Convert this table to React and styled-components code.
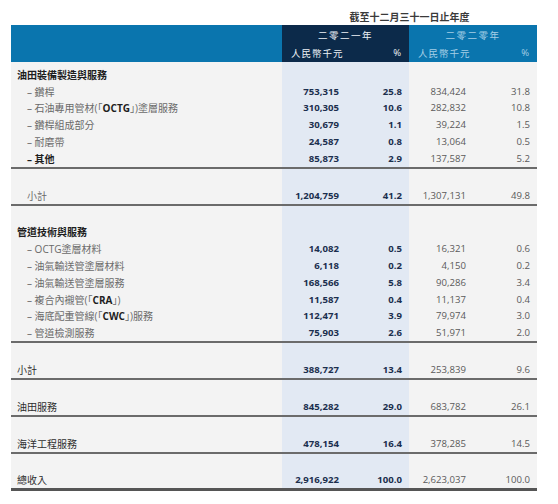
import styled, { createGlobalStyle } from "styled-components";

const Global = createGlobalStyle`
  body {
    margin: 0;
    background: #ffffff;
    font-family: "Open Sans", "Noto Sans CJK TC", sans-serif;
  }
`;

const COLS = "271px 63px 64px 63px 65px";

const Table = styled.div`
  width: 526px;
  margin-left: 11px;
  padding-top: 10px;
`;

const Caption = styled.div`
  margin-left: 271px;
  width: 255px;
  height: 15px;
  line-height: 15px;
  text-align: center;
  font-size: 10px;
  font-weight: 700;
  color: #3a3a3a;
`;

const Header = styled.div`
  display: grid;
  grid-template-columns: 271px 127px 128px;
  height: 37px;
`;

const HeadBlank = styled.div`
  background: #0a75ae;
`;

const HeadYear = styled.div`
  background: ${(p) => (p.$current ? "#0c2a4a" : "#0a75ae")};
  color: ${(p) => (p.$current ? "#eef2f6" : "#a5cfe6")};
  display: flex;
  flex-direction: column;
  font-size: 9.5px;
`;

const YearTitle = styled.div`
  height: 20px;
  line-height: 22px;
  text-align: center;
  letter-spacing: 1.5px;
`;

const UnitRow = styled.div`
  display: flex;
  justify-content: space-between;
  align-items: center;
  flex: 1;
  padding: 0 7px 2px 9px;
  letter-spacing: 1px;
`;

const Body = styled.div`
  padding-top: 4px;
  background: linear-gradient(
    to right,
    #f3f3f3 271px,
    #e2e9f3 271px,
    #e2e9f3 398px,
    #f3f3f3 398px
  );
`;

const Row = styled.div`
  display: grid;
  grid-template-columns: ${COLS};
  height: 16.8px;
  align-items: center;
  font-size: 9.6px;
`;

const Label = styled.div`
  padding-left: ${(p) => (p.$indent ? 16 : 6)}px;
  font-size: 10px;
  color: ${(p) => (p.$strong ? "#1e1e1e" : p.$dark ? "#2e2e2e" : "#6a6a6a")};
  font-weight: ${(p) => (p.$strong ? 700 : 400)};
  white-space: nowrap;
  b {
    color: #1e1e1e;
    font-weight: 700;
  }
`;

const Num = styled.div`
  text-align: right;
  padding-right: ${(p) => (p.$pct ? 7 : 6)}px;
  color: ${(p) => (p.$current ? "#1b2f4e" : "#5a5a5a")};
  font-weight: ${(p) => (p.$current ? 700 : 400)};
`;

const Spacer = styled.div`
  height: 18px;
`;

const Rule = styled.div`
  height: ${(p) => (p.$heavy ? 3 : 2)}px;
  background: ${(p) => (p.$heavy ? "#555" : "#6b6b6b")};
`;

const DataRow = ({ label, values, indent, dash = indent, strong, dark }) => (
  <Row>
    <Label $indent={indent} $strong={strong} $dark={dark}>
      {dash ? "– " : ""}
      {label}
    </Label>
    {values ? (
      <>
        <Num $current>{values[0]}</Num>
        <Num $current $pct>{values[1]}</Num>
        <Num>{values[2]}</Num>
        <Num $pct>{values[3]}</Num>
      </>
    ) : null}
  </Row>
);

const App = () => {
  return (
    <>
      <Global />
      <Table>
        <Caption>截至十二月三十一日止年度</Caption>
        <Header>
          <HeadBlank />
          <HeadYear $current>
            <YearTitle>二零二一年</YearTitle>
            <UnitRow>
              <span>人民幣千元</span>
              <span>%</span>
            </UnitRow>
          </HeadYear>
          <HeadYear>
            <YearTitle>二零二零年</YearTitle>
            <UnitRow>
              <span>人民幣千元</span>
              <span>%</span>
            </UnitRow>
          </HeadYear>
        </Header>
        <Body>
          <DataRow strong label="油田裝備製造與服務" />
          <DataRow indent label="鑽桿" values={["753,315", "25.8", "834,424", "31.8"]} />
          <DataRow
            indent
            label={
              <>
                石油專用管材(「<b>OCTG</b>」)塗層服務
              </>
            }
            values={["310,305", "10.6", "282,832", "10.8"]}
          />
          <DataRow indent label="鑽桿組成部分" values={["30,679", "1.1", "39,224", "1.5"]} />
          <DataRow indent label="耐磨帶" values={["24,587", "0.8", "13,064", "0.5"]} />
          <DataRow indent strong label="其他" values={["85,873", "2.9", "137,587", "5.2"]} />
          <Rule />
          <Spacer />
          <DataRow indent dash={false} label="小計" values={["1,204,759", "41.2", "1,307,131", "49.8"]} />
          <Rule />
          <Spacer />
          <DataRow strong label="管道技術與服務" />
          <DataRow indent label="OCTG塗層材料" values={["14,082", "0.5", "16,321", "0.6"]} />
          <DataRow indent label="油氣輸送管塗層材料" values={["6,118", "0.2", "4,150", "0.2"]} />
          <DataRow indent label="油氣輸送管塗層服務" values={["168,566", "5.8", "90,286", "3.4"]} />
          <DataRow
            indent
            label={
              <>
                複合內襯管(「<b>CRA</b>」)
              </>
            }
            values={["11,587", "0.4", "11,137", "0.4"]}
          />
          <DataRow
            indent
            label={
              <>
                海底配重管線(「<b>CWC</b>」)服務
              </>
            }
            values={["112,471", "3.9", "79,974", "3.0"]}
          />
          <DataRow indent label="管道檢測服務" values={["75,903", "2.6", "51,971", "2.0"]} />
          <Rule />
          <Spacer />
          <DataRow dark label="小計" values={["388,727", "13.4", "253,839", "9.6"]} />
          <Rule />
          <Spacer />
          <DataRow dark label="油田服務" values={["845,282", "29.0", "683,782", "26.1"]} />
          <Rule />
          <Spacer />
          <DataRow dark label="海洋工程服務" values={["478,154", "16.4", "378,285", "14.5"]} />
          <Rule />
          <Spacer />
          <DataRow dark label="總收入" values={["2,916,922", "100.0", "2,623,037", "100.0"]} />
          <Rule $heavy />
        </Body>
      </Table>
    </>
  );
};

export default App;
